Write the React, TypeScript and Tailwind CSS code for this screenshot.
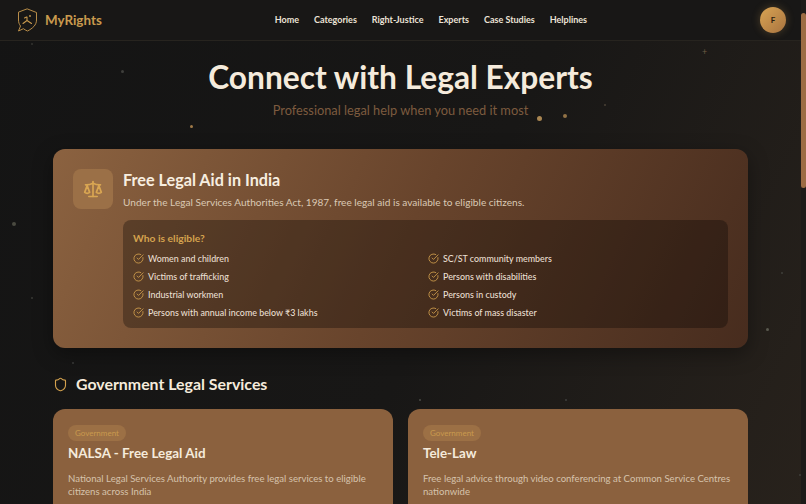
import { Scale, CircleCheckBig, Shield } from "lucide-react";

const navLinks = ["Home", "Categories", "Right-Justice", "Experts", "Case Studies", "Helplines"];

const eligibleLeft = [
  "Women and children",
  "Victims of trafficking",
  "Industrial workmen",
  "Persons with annual income below ₹3 lakhs",
];

const eligibleRight = [
  "SC/ST community members",
  "Persons with disabilities",
  "Persons in custody",
  "Victims of mass disaster",
];

const services = [
  {
    title: "NALSA - Free Legal Aid",
    text: "National Legal Services Authority provides free legal services to eligible citizens across India",
  },
  {
    title: "Tele-Law",
    text: "Free legal advice through video conferencing at Common Service Centres nationwide",
  },
];

// background specks: x, y, size, colour
const specks: [number, number, number, string][] = [
  [121, 70, 3, "#3f3f3c"],
  [31, 43, 2, "#33332f"],
  [190, 125, 3, "#a07a48"],
  [537, 116, 5, "#a98652"],
  [563, 114, 4, "#927245"],
  [604, 104, 2, "#4a4036"],
  [12, 222, 4, "#4a4a40"],
  [31, 297, 2, "#3a3a36"],
  [766, 328, 3, "#5a5a50"],
  [781, 272, 2, "#3f3f3a"],
  [72, 362, 2, "#3a3a38"],
  [419, 399, 2, "#4a4a46"],
  [565, 399, 2, "#3f3f3c"],
  [799, 474, 2, "#3f3f3a"],
];

function Logo() {
  return (
    <svg width="21" height="25" viewBox="0 0 21 25" fill="none" stroke="#c99a4e" strokeWidth="0.9" strokeLinecap="round" strokeLinejoin="round">
      <path d="M10.5 1 L19.5 4.5 V12 C19.5 17 15.5 20.5 10.5 23 C9 22.4 7.6 21.6 6.4 20.7 L1.5 23 L3.5 18 C2.2 16.3 1.5 14.3 1.5 12 V4.5 Z" />
      <path d="M10 9 V12.5 M10 12.5 L6 15.5 M10 12.5 L14.5 15.5 M7.5 10 L9.5 9" strokeWidth="1.1" />
      <circle cx="13" cy="8" r="0.9" fill="#c99a4e" stroke="none" />
    </svg>
  );
}

function EligibleColumn({ items }: { items: string[] }) {
  return (
    <ul className="flex flex-col gap-[5px]">
      {items.map((item) => (
        <li key={item} className="flex items-center gap-[4px] h-[13px] text-[8.9px] leading-[13px] font-medium text-[#e9dfd0]">
          <CircleCheckBig size={11} strokeWidth={1.8} className="text-[#d4a24e] shrink-0" />
          <span>{item}</span>
        </li>
      ))}
    </ul>
  );
}

function ServiceCard({ title, text }: { title: string; text: string }) {
  return (
    <div className="flex-1 basis-0 min-w-0 h-[200px] rounded-t-xl bg-[#8b613e] px-[15px] pt-4">
      <span className="block w-fit h-[16px] px-[7px] rounded-full bg-[#9c7045] text-[8px] leading-[16px] text-[#c99a4e]">Government</span>
      <h3 className="mt-[3px] text-[13.4px] leading-[18px] font-bold text-[#f5ebdc]">{title}</h3>
      <p className="mt-[10px] text-[9.6px] leading-[13px] text-[#d6c3ac]">{text}</p>
    </div>
  );
}

export default function App() {
  return (
    <div className="relative flex h-[504px] w-[806px] overflow-hidden bg-[linear-gradient(115deg,#141414_0%,#181716_55%,#28221c_100%)] font-['Lato','Open_Sans',sans-serif]">
      <div className="relative flex-1 min-w-0">
        {specks.map(([x, y, size, color], i) => (
          <span
            key={i}
            className="absolute rounded-full"
            style={{ left: x, top: y, width: size, height: size, backgroundColor: color }}
          />
        ))}
        <span className="absolute left-[702px] top-[47px] text-[9px] leading-[10px] text-[#6e5c44]">+</span>

        <nav className="relative flex h-[41px] items-center border-b border-[#27241f] bg-[#181716] pl-[17px] pr-[15px]">
          <div className="flex items-center gap-[7px]">
            <Logo />
            <span className="text-[13.4px] font-bold text-[#c99a4e]">MyRights</span>
          </div>
          <div className="flex-1 flex justify-center gap-[15px] text-[9px] font-bold text-[#ece3d6]">
            {navLinks.map((link) => (
              <a key={link} href="#">{link}</a>
            ))}
          </div>
          <div className="flex h-[26px] w-[26px] items-center justify-center rounded-full bg-gradient-to-br from-[#d9a453] to-[#a87440] text-[8px] font-bold text-[#2a1c10] shadow-[0_0_8px_rgba(201,154,78,0.3)]">F</div>
        </nav>

        <header className="relative pt-4 text-center">
          <h1 className="text-[31.7px] leading-[40px] font-bold text-[#f5ebdc]">Connect with Legal Experts</h1>
          <p className="mt-1 text-[12.8px] leading-[18px] text-[#7d5b3f]">Professional legal help when you need it most</p>
        </header>

        <section className="relative mx-[53px] mt-[30px] flex h-[199px] gap-[10px] rounded-xl bg-[linear-gradient(115deg,#8b6240_0%,#68442c_50%,#472c1e_100%)] p-5 shadow-[0_6px_20px_rgba(0,0,0,0.35)]">
          <div className="flex h-10 w-10 shrink-0 items-center justify-center rounded-lg bg-[#9b7047]">
            <Scale size={20} strokeWidth={2} className="text-[#d9a652]" />
          </div>
          <div className="flex-1 min-w-0">
            <h2 className="text-[16.2px] leading-[22px] font-bold text-[#f7eee0]">Free Legal Aid in India</h2>
            <p className="mt-[4px] text-[10.1px] leading-[14px] text-[#dac9b4]">Under the Legal Services Authorities Act, 1987, free legal aid is available to eligible citizens.</p>
            <div className="mt-[11px] h-[108px] rounded-lg bg-[#000000]/30 px-[10px] pt-[10px]">
              <h3 className="text-[10.3px] leading-[16px] font-bold text-[#d4a24e]">Who is eligible?</h3>
              <div className="mt-[6px] grid grid-cols-2 gap-[5px]">
                <EligibleColumn items={eligibleLeft} />
                <EligibleColumn items={eligibleRight} />
              </div>
            </div>
          </div>
        </section>

        <div className="relative mx-[53px] mt-[25px] flex items-center gap-[8px]">
          <Shield size={15} strokeWidth={1.8} className="text-[#d4a24e]" />
          <h2 className="text-[15.9px] leading-[22px] font-bold text-[#f5ebdc]">Government Legal Services</h2>
        </div>

        <div className="relative mx-[53px] mt-[14px] flex gap-[15px]">
          {services.map((service) => (
            <ServiceCard key={service.title} title={service.title} text={service.text} />
          ))}
        </div>
      </div>

      <div className="w-[5px] shrink-0 bg-[#1d1b19] pt-[13px]">
        <div className="h-[175px] rounded-full bg-[#9c6c44]" />
      </div>
    </div>
  );
}
